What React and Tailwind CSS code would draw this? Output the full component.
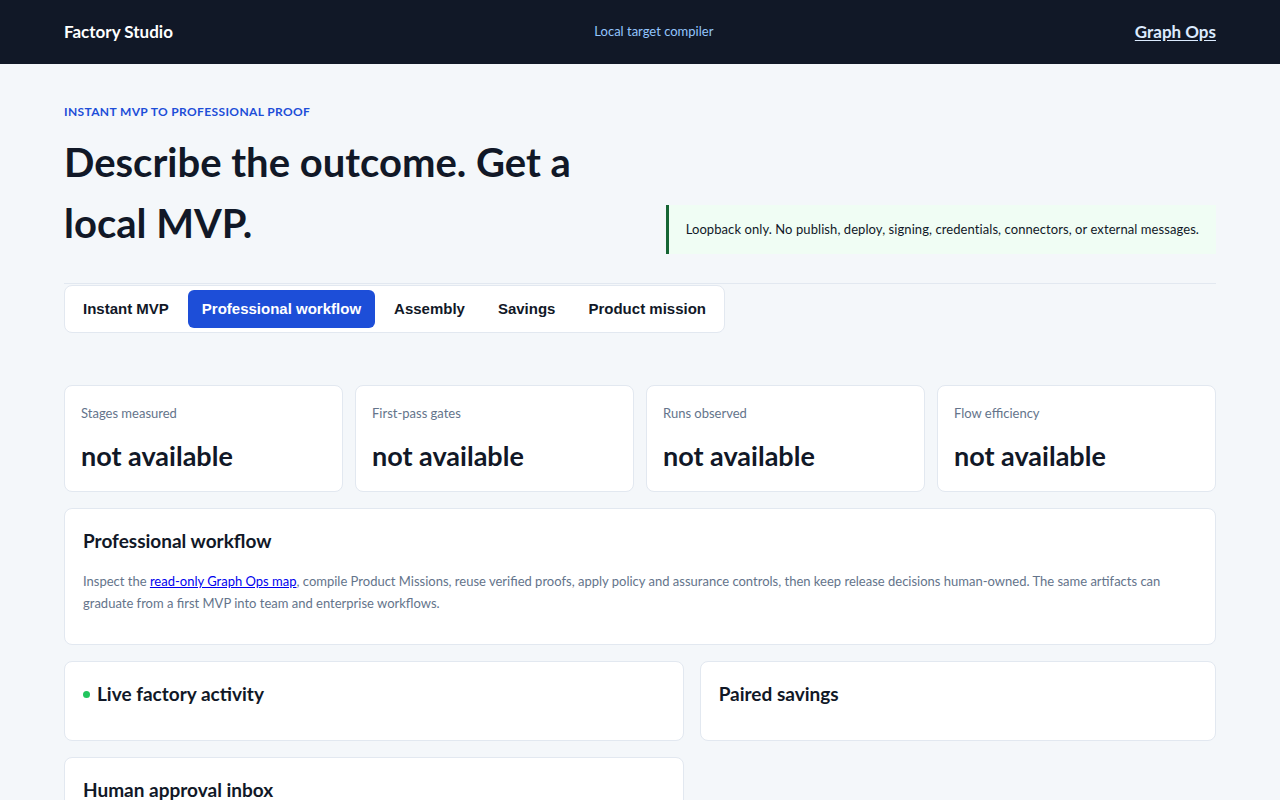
import React from "react";

const sans = "font-['Lato','Open_Sans',sans-serif]";

const stats = [
  { label: "Stages measured", value: "not available" },
  { label: "First-pass gates", value: "not available" },
  { label: "Runs observed", value: "not available" },
  { label: "Flow efficiency", value: "not available" },
];

const tabs = ["Instant MVP", "Professional workflow", "Assembly", "Savings", "Product mission"];

function Panel({ children, className = "" }) {
  return (
    <section className={`rounded-lg border border-[#e2e8f0] bg-white ${className}`}>{children}</section>
  );
}

export default function App() {
  return (
    <div className={`min-h-screen bg-[#f4f7fa] text-[#111827] ${sans}`}>
      <header className="flex h-16 items-center justify-between bg-[#111827] px-16">
        <div className="text-[17px] font-bold text-white">Factory Studio</div>
        <div className="text-[13px] text-[#93c5fd]">Local target compiler</div>
        <a href="#" className="text-[17px] font-bold text-[#dbeafe] underline underline-offset-2">
          Graph Ops
        </a>
      </header>

      <main className="px-16 pt-[39px] pb-10">
        <div className="flex items-end justify-between gap-6 border-b border-[#e2e8f0] pb-[29px]">
          <div>
            <p className="text-[12px] font-bold uppercase tracking-[0.03em] text-[#1d4ed8]">
              Instant MVP to professional proof
            </p>
            <h1 className="mt-[11px] max-w-[580px] text-[40px] font-bold leading-[61px] text-[#111827]">
              Describe the outcome. Get a local MVP.
            </h1>
          </div>
          <div className="shrink-0 border-l-[3px] border-[#166534] bg-[#f0fdf4] px-[17px] py-[15px] text-[13px] leading-[19px] tracking-[0.006em] text-[#111827]">
            Loopback only. No publish, deploy, signing, credentials, connectors, or external messages.
          </div>
        </div>

        <nav className="mt-px inline-flex gap-[5px] rounded-lg border border-[#e2e8f0] bg-white p-1 font-['Liberation_Sans',Arial,sans-serif]">
          {tabs.map((t) => (
            <button
              key={t}
              className={`rounded-md px-[14px] py-[10px] text-[15px] font-bold leading-[18px] ${
                t === "Professional workflow" ? "bg-[#1d4ed8] text-white" : "text-[#111827]"
              }`}
            >
              {t}
            </button>
          ))}
        </nav>

        <div className="mt-[52px] grid grid-cols-4 gap-3">
          {stats.map((s) => (
            <Panel key={s.label} className="h-[107px] px-4 pt-[18px]">
              <div className="text-[13px] leading-[18px] text-[#64748b]">{s.label}</div>
              <div className="mt-[18px] text-[27px] font-bold leading-[32px] text-[#111827]">{s.value}</div>
            </Panel>
          ))}
        </div>

        <Panel className="mt-4 px-[18px] pt-[19px] pb-[30px]">
          <h2 className="text-[19px] font-bold leading-[26px]">Professional workflow</h2>
          <p className="mt-[16px] text-[13px] leading-[22px] text-[#64748b]">
            Inspect the{" "}
            <a href="#" className="text-[#0000ee] underline">
              read-only Graph Ops map
            </a>
            , compile Product Missions, reuse verified proofs, apply policy and assurance controls, then keep release
            decisions human-owned. The same artifacts can graduate from a first MVP into team and enterprise workflows.
          </p>
        </Panel>

        <div className="mt-4 grid grid-cols-[1.2fr_1fr] gap-4">
          <Panel className="h-[80px] px-[18px] pt-[19px]">
            <h2 className="flex items-center gap-[7px] text-[19px] font-bold leading-[26px]">
              <span className="h-[7px] w-[7px] rounded-full bg-[#22c55e]" />
              Live factory activity
            </h2>
          </Panel>
          <Panel className="h-[80px] px-[18px] pt-[19px]">
            <h2 className="text-[19px] font-bold leading-[26px]">Paired savings</h2>
          </Panel>
          <Panel className="h-[80px] px-[18px] pt-[19px]">
            <h2 className="text-[19px] font-bold leading-[26px]">Human approval inbox</h2>
          </Panel>
        </div>
      </main>
    </div>
  );
}
